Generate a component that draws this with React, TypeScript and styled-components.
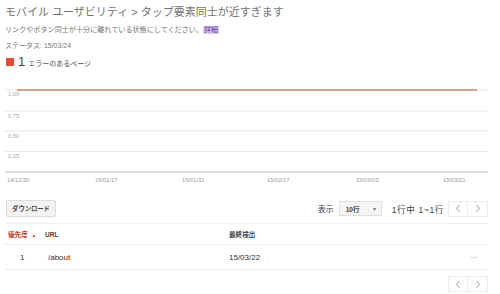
import React from "react";
import styled, { createGlobalStyle } from "styled-components";

const Global = createGlobalStyle`
  html, body { margin: 0; padding: 0; background: #fff; }
  body { font-family: "Liberation Sans", Arial, "Noto Sans CJK JP", sans-serif; }
`;

const Page = styled.div`
  width: 500px;
  height: 294px;
  overflow: hidden;
  padding: 0 12px 0 5px;
  box-sizing: border-box;
`;

const Title = styled.h1`
  margin: 0;
  padding-top: 3px;
  height: 21px;
  box-sizing: border-box;
  font-weight: normal;
  font-size: 11px;
  line-height: 18px;
  color: #737373;
  white-space: nowrap;
`;

const Desc = styled.div`
  margin-top: 4px;
  height: 10px;
  font-size: 7.1px;
  line-height: 10px;
  color: #777;
  white-space: nowrap;
`;

const Link = styled.a`
  color: #663399;
  background: #ddd0f0;
  padding: 0 1px;
  text-decoration: none;
`;

const Status = styled.div`
  margin-top: 6px;
  height: 10px;
  font-size: 7px;
  line-height: 10px;
  color: #777;
`;

const ErrorRow = styled.div`
  margin-top: 4px;
  height: 13px;
  display: flex;
  align-items: center;
  padding-left: 1px;
`;

const Swatch = styled.span`
  width: 8px;
  height: 8px;
  background: #dd4b39;
  margin-right: 4px;
`;

const Count = styled.span`
  font-size: 13px;
  color: #444;
  margin-right: 3px;
  line-height: 13px;
`;

const Small = styled.span`
  font-size: 7px;
  color: #555;
  padding-top: 2px;
`;

const ChartSvg = styled.svg`
  display: block;
  margin: 16px 0 0 -5px;
  width: 500px;
  height: 102px;
`;

const Toolbar = styled.div`
  margin-top: 14px;
  height: 17px;
  display: flex;
  align-items: center;
  padding-left: 1px;
`;

const Button = styled.button`
  height: 17px;
  width: 50px;
  padding: 0;
  border: 1px solid #dcdcdc;
  background: #f3f3f3;
  border-radius: 2px;
  font-family: inherit;
  font-size: 6.3px;
  font-weight: bold;
  color: #444;
`;

const Spacer = styled.div`
  flex: 1;
`;

const Label = styled.span`
  font-size: 8px;
  color: #444;
  margin-right: 5px;
`;

const Select = styled.div`
  width: 43px;
  height: 15px;
  box-sizing: border-box;
  border: 1px solid #e0e0e0;
  background: #f5f5f5;
  display: flex;
  align-items: center;
  justify-content: space-between;
  padding: 0 5px 0 6px;
  font-size: 6.5px;
  font-weight: bold;
  color: #444;
  margin-right: 10px;
`;

const Caret = styled.span`
  font-size: 6px;
  color: #777;
  font-weight: normal;
`;

const RangeText = styled.span`
  font-size: 8.6px;
  letter-spacing: 0.6px;
  color: #444;
  margin-right: 4px;
`;

const Pager = styled.div`
  display: flex;
  height: 16px;
`;

const PagerBtn = styled.div`
  width: 20px;
  height: 16px;
  box-sizing: border-box;
  border: 1px solid #ececec;
  display: flex;
  align-items: center;
  justify-content: center;
  & + & { border-left: none; }
`;

const Table = styled.div`
  margin-top: 6px;
  border-top: 1px solid #f0f0f0;
`;

const Row = styled.div<{ $head?: boolean }>`
  display: grid;
  grid-template-columns: 40px 183px 1fr 18px;
  align-items: center;
  height: ${(p) => (p.$head ? "20px" : "24px")};
  border-bottom: 1px solid #ececec;
  font-size: ${(p) => (p.$head ? "6.6px" : "8px")};
  font-weight: ${(p) => (p.$head ? "bold" : "normal")};
  color: ${(p) => (p.$head ? "#444" : "#333")};
`;

const Cell = styled.div<{ $red?: boolean; $pad?: number }>`
  padding-left: ${(p) => p.$pad ?? 0}px;
  color: ${(p) => (p.$red ? "#c53929" : "inherit")};
  white-space: nowrap;
`;

const SortArrow = styled.span`
  font-size: 4.5px;
  margin-left: 4px;
  vertical-align: middle;
`;

const Dots = styled.div`
  color: #888;
  font-size: 8px;
  letter-spacing: -0.5px;
`;

const BottomPager = styled.div`
  margin-top: 6px;
  display: flex;
  justify-content: flex-end;
`;

const Chevron = ({ dir }: { dir: "l" | "r" }) => (
  <svg width="6" height="9" viewBox="0 0 6 9">
    <path
      d={dir === "l" ? "M4.5 1 L1.5 4.5 L4.5 8" : "M1.5 1 L4.5 4.5 L1.5 8"}
      fill="none"
      stroke="#999"
      strokeWidth="1"
    />
  </svg>
);

const PagerPair = () => (
  <Pager>
    <PagerBtn>
      <Chevron dir="l" />
    </PagerBtn>
    <PagerBtn>
      <Chevron dir="r" />
    </PagerBtn>
  </Pager>
);

const grid = [27, 47, 67.5];
const yLabels = [
  { t: "1.00", y: 12 },
  { t: "0.75", y: 34 },
  { t: "0.50", y: 54 },
  { t: "0.25", y: 74 },
];
const xLabels = [
  { t: "14/12/30", x: 7 },
  { t: "15/01/17", x: 95 },
  { t: "15/01/31", x: 182 },
  { t: "15/02/17", x: 267 },
  { t: "15/03/03", x: 356 },
  { t: "15/03/21", x: 443 },
];

const Chart = () => (
  <ChartSvg viewBox="0 0 500 102">
    <line x1="5" x2="488" y1="6" y2="6" stroke="#e6e6e6" strokeWidth="1" />
    {grid.map((y) => (
      <line key={y} x1="5" x2="488" y1={y} y2={y} stroke="#e6e6e6" strokeWidth="1.2" />
    ))}
    <line x1="5" x2="488" y1="88" y2="88" stroke="#bdbdbd" strokeWidth="1.2" />
    <line x1="17" x2="477" y1="6" y2="6" stroke="#c9876a" strokeWidth="1.3" />
    {yLabels.map((l) => (
      <text key={l.t} x="8" y={l.y} fontSize="5.8" fill="#aaa" fontFamily="Liberation Sans, Arial, sans-serif">
        {l.t}
      </text>
    ))}
    {xLabels.map((l) => (
      <text key={l.t} x={l.x} y="98" fontSize="5.8" fill="#999" fontFamily="Liberation Sans, Arial, sans-serif">
        {l.t}
      </text>
    ))}
  </ChartSvg>
);

export default function App() {
  return (
    <Page>
      <Global />
      <Title>モバイル ユーザビリティ &gt; タップ要素同士が近すぎます</Title>
      <Desc>
        リンクやボタン同士が十分に離れている状態にしてください。<Link href="#">詳細</Link>
      </Desc>
      <Status>ステータス: 15/03/24</Status>
      <ErrorRow>
        <Swatch />
        <Count>1</Count>
        <Small>エラーのあるページ</Small>
      </ErrorRow>
      <Chart />
      <Toolbar>
        <Button>ダウンロード</Button>
        <Spacer />
        <Label>表示</Label>
        <Select>
          10行
          <Caret>▾</Caret>
        </Select>
        <RangeText>1行中 1~1行</RangeText>
        <PagerPair />
      </Toolbar>
      <Table>
        <Row $head>
          <Cell $red $pad={3}>
            優先度<SortArrow>▲</SortArrow>
          </Cell>
          <Cell>URL</Cell>
          <Cell $pad={1}>最終検出</Cell>
          <Cell />
        </Row>
        <Row>
          <Cell $pad={15}>1</Cell>
          <Cell $pad={3}>/about</Cell>
          <Cell $pad={1}>15/03/22</Cell>
          <Dots>···</Dots>
        </Row>
      </Table>
      <BottomPager>
        <PagerPair />
      </BottomPager>
    </Page>
  );
}
